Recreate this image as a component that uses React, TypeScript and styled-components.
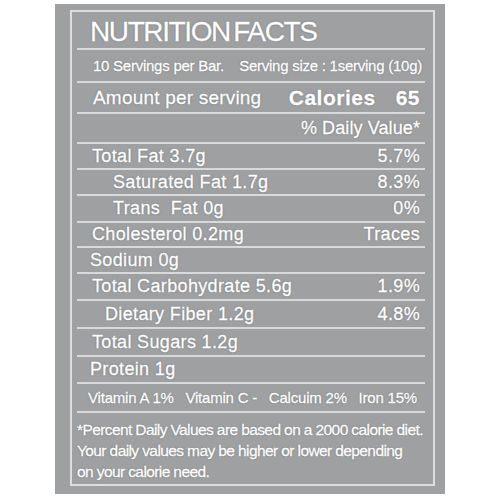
import { FC } from 'react';
import styled, { createGlobalStyle } from 'styled-components';

const GlobalStyle = createGlobalStyle`
html, body {
margin:0;
padding:0;
background:#ffffff;
}
`;

/*----------Label--------------------*/
const Label = styled.div`
box-sizing:border-box;
width:390px;
height:490px;
margin:4px 0 0 55px;
padding:6px 10px 8px 15px;
background:#9fa0a2;
font-family:"Liberation Sans", Arial, sans-serif;
color:#ffffff;
-webkit-text-stroke:0.35px #ffffff;
text-shadow:0 0 1px rgba(60,60,62,0.75), 0 0 2px rgba(90,90,92,0.4);
`;
const Frame = styled.div`
box-sizing:border-box;
height:100%;
border:2px solid #dedede;
padding:0 8px 0 5px;
display:flex;
flex-direction:column;
`;

/*----------Rows--------------------*/
const Row = styled.div<{ $h: number; $pl?: number; $pr?: number; $last?: boolean }>`
box-sizing:border-box;
height:${p => p.$h}px;
display:flex;
align-items:center;
justify-content:space-between;
padding-left:${p => p.$pl ?? 15}px;
padding-right:${p => p.$pr ?? 5}px;
border-bottom:${p => (p.$last ? 'none' : '2px solid #d9d9db')};
white-space:nowrap;
`;
const Title = styled.h1`
margin:4px 0 0 0;
font-size:28px;
font-weight:normal;
letter-spacing:-1.4px;
word-spacing:-3px;
`;
const Small = styled.span<{ $ls?: number }>`
font-size:15px;
letter-spacing:${p => p.$ls ?? -0.2}px;
`;
const Medium = styled.span`
font-size:18px;
letter-spacing:0.35px;
`;
const Big = styled.span`
font-size:19px;
letter-spacing:0.2px;
`;
const Cal = styled.span`
display:flex;
gap:20px;
font-size:21px;
font-weight:bold;
letter-spacing:0.5px;
`;
const DailyValue = styled.span`
margin-left:auto;
font-size:18px;
letter-spacing:0.1px;
`;
const Vitamins = styled.div`
flex:1;
display:flex;
justify-content:space-between;
font-size:15px;
letter-spacing:-0.2px;
`;
const Footnote = styled.p`
margin:0;
padding-top:4px;
font-size:15.5px;
line-height:21px;
letter-spacing:-0.6px;
white-space:nowrap;
`;

type Nutrient = { name: string; value?: string; h: number; pl: number };

const nutrients: Nutrient[] = [
    { name: 'Total Fat 3.7g', value: '5.7%', h: 26, pl: 15 },
    { name: 'Saturated Fat 1.7g', value: '8.3%', h: 26, pl: 36 },
    { name: 'Trans\u00a0\u00a0Fat 0g', value: '0%', h: 27, pl: 36 },
    { name: 'Cholesterol 0.2mg', value: 'Traces', h: 25, pl: 15 },
    { name: 'Sodium 0g', h: 26, pl: 13 },
    { name: 'Total Carbohydrate 5.6g', value: '1.9%', h: 27, pl: 15 },
    { name: 'Dietary Fiber 1.2g', value: '4.8%', h: 28, pl: 28 },
    { name: 'Total Sugars 1.2g', h: 28, pl: 15 },
    { name: 'Protein 1g', h: 27, pl: 13 },
];

const App: FC = () => {
    return (
        <>
            <GlobalStyle />
            <Label>
                <Frame>
                    <Row $h={38} $pl={13}>
                        <Title>NUTRITION FACTS</Title>
                    </Row>
                    <Row $h={33} $pl={16} $pr={3}>
                        <Small $ls={-0.25}>10 Servings per Bar.</Small>
                        <Small $ls={-0.25}>Serving size : 1serving (10g)</Small>
                    </Row>
                    <Row $h={31} $pl={16}>
                        <Big>Amount per serving</Big>
                        <Cal><span>Calories</span><span>65</span></Cal>
                    </Row>
                    <Row $h={30}>
                        <DailyValue>% Daily Value*</DailyValue>
                    </Row>

                    {nutrients.map(n => (
                        <Row key={n.name} $h={n.h} $pl={n.pl}>
                            <Medium>{n.name}</Medium>
                            {n.value && <Medium>{n.value}</Medium>}
                        </Row>
                    ))}

                    <Row $h={29} $pl={11} $pr={8}>
                        <Vitamins>
                            <span>Vitamin A 1%</span>
                            <span>Vitamin C -</span>
                            <span>Calcuim 2%</span>
                            <span>Iron 15%</span>
                        </Vitamins>
                    </Row>
                    <Row $h={71} $pl={0} $pr={0} $last>
                        <Footnote>
                            *Percent Daily Values are based on a 2000 calorie diet.<br />
                            Your daily values may be higher or lower depending<br />
                            on your calorie need.
                        </Footnote>
                    </Row>
                </Frame>
            </Label>
        </>
    );
};
export default App;
